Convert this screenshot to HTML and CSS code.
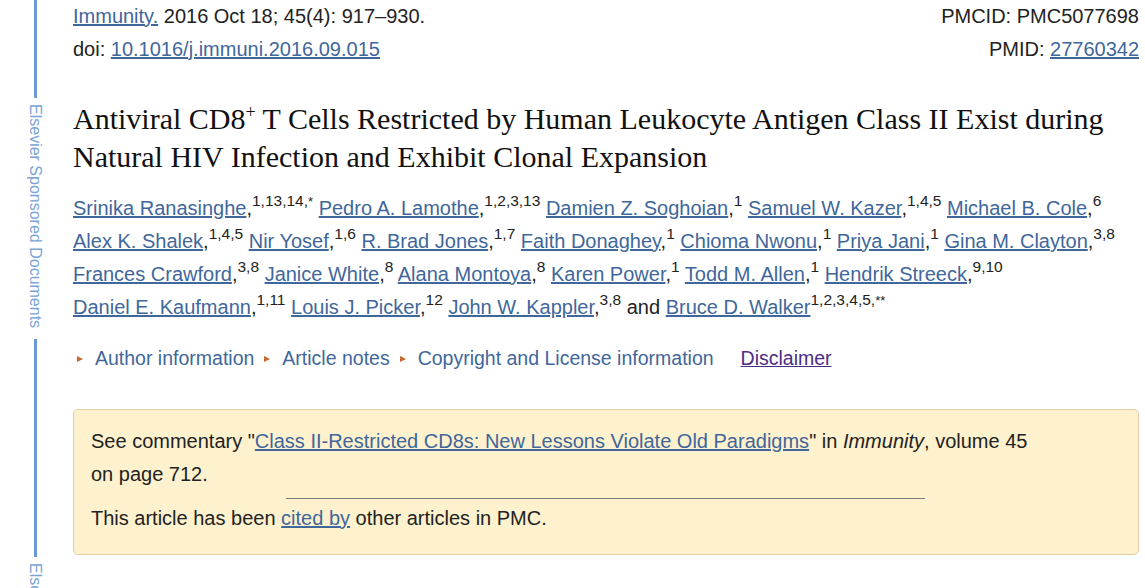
FILE: index.html
```html
<!DOCTYPE html>
<html lang="en">
<head>
<meta charset="utf-8">
<title>Antiviral CD8+ T Cells Restricted by HLA Class II</title>
<link rel="stylesheet" href="styles.css">
</head>
<body>
<div class="page">
  <aside class="rail">
    <div class="rail-col">
      <span class="rail-line first"></span>
      <span class="rail-text">Elsevier Sponsored Documents</span>
      <span class="rail-line"></span>
      <span class="rail-text">Elsevier Sponsored Documents</span>
    </div>
  </aside>
  <main class="main">
    <div class="cite-row">
      <div><a href="#">Immunity.</a> 2016 Oct 18; 45(4): 917–930.</div>
      <div>PMCID: PMC5077698</div>
    </div>
    <div class="cite-row">
      <div>doi: <a href="#">10.1016/j.immuni.2016.09.015</a></div>
      <div>PMID: <a href="#">27760342</a></div>
    </div>

    <h1 class="title">Antiviral CD8<sup>+</sup> T Cells Restricted by Human Leukocyte Antigen Class II Exist during Natural HIV Infection and Exhibit Clonal Expansion</h1>

    <p class="authors">
      <a href="#">Srinika Ranasinghe</a>,<sup>1,13,14,</sup><sup class="ast">*</sup> <a href="#">Pedro A. Lamothe</a>,<sup>1,2,3,13</sup> <a href="#">Damien Z. Soghoian</a>,<sup>1</sup> <a href="#">Samuel W. Kazer</a>,<sup>1,4,5</sup> <a href="#">Michael B. Cole</a>,<sup>6</sup>
      <a href="#">Alex K. Shalek</a>,<sup>1,4,5</sup> <a href="#">Nir Yosef</a>,<sup>1,6</sup> <a href="#">R. Brad Jones</a>,<sup>1,7</sup> <a href="#">Faith Donaghey</a>,<sup>1</sup> <a href="#">Chioma Nwonu</a>,<sup>1</sup> <a href="#">Priya Jani</a>,<sup>1</sup> <a href="#">Gina M. Clayton</a>,<sup>3,8</sup>
      <a href="#">Frances Crawford</a>,<sup>3,8</sup> <a href="#">Janice White</a>,<sup>8</sup> <a href="#">Alana Montoya</a>,<sup>8</sup> <a href="#">Karen Power</a>,<sup>1</sup> <a href="#">Todd M. Allen</a>,<sup>1</sup> <a href="#">Hendrik Streeck</a>,<sup>9,10</sup>
      <a href="#">Daniel E. Kaufmann</a>,<sup>1,11</sup> <a href="#">Louis J. Picker</a>,<sup>12</sup> <a href="#">John W. Kappler</a>,<sup>3,8</sup> and <a href="#">Bruce D. Walker</a><sup>1,2,3,4,5,</sup><sup class="ast">**</sup>
    </p>

    <nav class="info-links">
      <span class="info-item">Author information</span>
      <span class="info-item">Article notes</span>
      <span class="info-item">Copyright and License information</span>
      <a href="#" class="disclaimer">Disclaimer</a>
    </nav>

    <section class="note-box">
      <p class="note-text">See commentary "<a href="#">Class II-Restricted CD8s: New Lessons Violate Old Paradigms</a>" in <em>Immunity</em>, volume 45 on page 712.</p>
      <hr class="note-rule">
      <p class="note-cited">This article has been <a href="#">cited by</a> other articles in PMC.</p>
    </section>
  </main>
</div>
</body>
</html>
```

FILE: styles.css
```css
html, body {
  margin: 0;
  padding: 0;
  background: #ffffff;
}

body {
  font-family: "Liberation Sans", Arial, sans-serif;
  font-size: 20px;
  color: #222222;
  height: 588px;
  overflow: hidden;
}

a {
  color: #3f679b;
  text-decoration: underline;
}

.page {
  display: flex;
  align-items: flex-start;
}

.rail {
  width: 73px;
  flex: 0 0 73px;
  height: 588px;
  overflow: hidden;
}

.rail-col {
  width: 17px;
  margin-left: 27px;
  display: flex;
  flex-direction: column;
  align-items: center;
}

.rail-line {
  display: block;
  width: 3px;
  height: 218px;
  background: #6c9bd1;
  flex: 0 0 auto;
}

.rail-line.first {
  height: 98px;
}

.rail-text {
  writing-mode: vertical-rl;
  font-size: 16px;
  line-height: 17px;
  color: #7aa4d6;
  margin: 6px 0 11px;
  white-space: nowrap;
  flex: 0 0 auto;
}

.main {
  width: 1066px;
  flex: 0 0 1066px;
}

.cite-row {
  display: flex;
  justify-content: space-between;
  line-height: 33px;
}

.title {
  font-family: "Liberation Serif", "Times New Roman", serif;
  font-weight: normal;
  font-size: 30px;
  line-height: 38px;
  color: #111111;
  margin: 34px 0 16px;
}

.title sup {
  font-size: 18px;
  line-height: 0;
  vertical-align: 11px;
}

.authors {
  margin: 0;
  line-height: 33px;
}

.authors a {
  white-space: nowrap;
}

.authors sup {
  font-size: 15.5px;
  line-height: 0;
  vertical-align: 9px;
  color: #222222;
}

.authors sup.ast {
  font-size: 13px;
}

.info-links {
  display: flex;
  align-items: center;
  gap: 10px;
  margin: 18px 0 34px 4px;
  line-height: 33px;
  font-size: 19.5px;
}

.info-item {
  color: #3f679b;
  display: inline-flex;
  align-items: center;
}

.info-item::before {
  content: "";
  display: inline-block;
  width: 0;
  height: 0;
  border-top: 3.5px solid transparent;
  border-bottom: 3.5px solid transparent;
  border-left: 6px solid #c4692f;
  margin-right: 12px;
}

.info-links .disclaimer {
  color: #4d2c84;
  margin-left: 17px;
}

.note-box {
  background: #fef1cd;
  border: 1px solid #e6cca6;
  border-radius: 5px;
  padding: 15px 18px 19px 17px;
  line-height: 33px;
}

.note-text {
  margin: 0;
  max-width: 950px;
}

.note-rule {
  width: 639px;
  height: 0;
  border: 0;
  border-top: 1px solid #7b7b80;
  margin: 7px auto 3px;
}

.note-cited {
  margin: 0;
}
```
